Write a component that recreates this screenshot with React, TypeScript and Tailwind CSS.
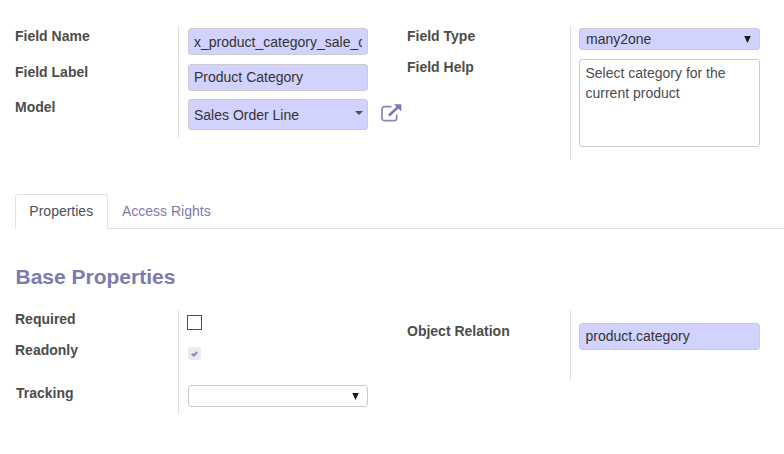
import type { ReactNode } from "react";

function Label({ className = "", children }: { className?: string; children: ReactNode }) {
  return <div className={`font-bold leading-5 text-[#4c4c4c] ${className}`}>{children}</div>;
}

function Field({ className = "", children }: { className?: string; children?: ReactNode }) {
  return (
    <div className={`flex items-center rounded-[3px] border border-[#cccccf] text-[#333] ${className}`}>
      {children}
    </div>
  );
}

function SelectArrow() {
  return (
    <svg className="ml-auto mr-[8px] h-[7px] w-[7px] shrink-0" viewBox="0 0 7 7" fill="#1b1b1b">
      <path d="M0.200 0H6.800L3.500 7Z" />
    </svg>
  );
}

function ExternalLink() {
  return (
    <svg className="mb-[3px] ml-[13px] h-[18px] w-[21px]" viewBox="0 0 21 18" fill="none">
      <path
        d="M10.500 2.600H3.400A2.400 2.400 0 0 0 1 5V14.300A2.400 2.400 0 0 0 3.400 16.700H13.300A2.400 2.400 0 0 0 15.700 14.300V10.500"
        stroke="#8a87b8"
        strokeWidth="1.7"
      />
      <path d="M8 11.400L17.500 2.700" stroke="#7c7bad" strokeWidth="2.700" />
      <path d="M13 0.300H20.300V7.600Z" fill="#7c7bad" />
    </svg>
  );
}

export default function App() {
  return (
    <main className="h-[454px] w-[784px] overflow-hidden bg-white pt-[26px] font-['Liberation_Sans',Arial,sans-serif] text-sm">
      <section className="flex h-[168px] items-start pl-[15px]">
        <div className="w-[163px]">
          <Label>Field Name</Label>
          <Label className="mt-4">Field Label</Label>
          <Label className="mt-[15px]">Model</Label>
        </div>
        <div className="h-[112px] w-[229px] border-l border-[#ddd] pl-[9px] pt-[2px]">
          <Field className="h-[27px] w-[180px] bg-[#d2d2ff] px-[5px]">
            <span className="overflow-hidden whitespace-nowrap">x_product_category_sale_order</span>
          </Field>
          <Field className="mt-[9px] h-[27px] w-[180px] bg-[#d2d2ff] px-[5px] pb-px">Product Category</Field>
          <div className="mt-2 flex items-center">
            <Field className="h-[31px] w-[180px] bg-[#d2d2ff] px-[5px]">
              Sales Order Line
              <svg className="mb-1 ml-auto mr-[-1px] h-1 w-2" viewBox="0 0 8 4" fill="#4c4c4c">
                <path d="M0 0H8L4 4Z" />
              </svg>
            </Field>
            <ExternalLink />
          </div>
        </div>
        <div className="w-[163px]">
          <Label>Field Type</Label>
          <Label className="mt-[11px]">Field Help</Label>
        </div>
        <div className="h-[134px] border-l border-[#ddd] pl-[8px] pt-[2px]">
          <Field className="h-[22px] w-[181px] bg-[#d2d2ff] pl-[6px]">
            many2one
            <SelectArrow />
          </Field>
          <div className="mt-[9px] h-[88px] w-[181px] rounded-[3px] border border-[#ccc] px-[5.500px] pt-[3px] leading-5 text-[#4c4c4c]">
            Select category for the current product
          </div>
        </div>
      </section>

      <nav className="flex h-[35px] pl-[15px]">
        <div className="w-[92.500px] rounded-t-[3px] border border-b-0 border-[#dee2e6] pt-[6px] text-center leading-5 text-[#495057]">
          Properties
        </div>
        <div className="flex-1 border-b border-[#dee2e6] pl-[14.500px] pt-[7px] leading-5 text-[#7c7bad]">
          Access Rights
        </div>
      </nav>

      <h2 className="mt-[33px] h-12 pl-[15.500px] text-[21px] font-bold leading-[30px] text-[#7c7bad]">
        Base Properties
      </h2>

      <section className="flex items-start pl-[15px]">
        <div className="mt-[-1px] w-[163px]">
          <Label>Required</Label>
          <Label className="mt-[11px]">Readonly</Label>
          <Label className="mt-[23px] pl-px">Tracking</Label>
        </div>
        <div className="h-[104px] w-[229px] border-l border-[#ddd] pl-[8px] pt-[5px]">
          <div className="h-[15px] w-[15px] border border-[#4d4d4d] bg-white" />
          <div className="ml-px mt-[17px] flex h-[13px] w-[13px] items-center justify-center rounded-[3px] bg-[#e9ecef]">
            <svg className="h-[6px] w-[7px]" viewBox="0 0 7 6" fill="none">
              <path d="M0.800 2.800L2.700 4.500L6.200 1" stroke="#8a88bd" strokeWidth="2" />
            </svg>
          </div>
          <Field className="ml-px mt-[25px] h-[22px] w-[180px]">
            <SelectArrow />
          </Field>
        </div>
        <div className="w-[163px] pt-[11px]">
          <Label>Object Relation</Label>
        </div>
        <div className="h-[70px] border-l border-[#ddd] pl-[8px] pt-[13px]">
          <Field className="h-[27px] w-[181px] bg-[#d2d2ff] px-[5.500px] pb-px">product.category</Field>
        </div>
      </section>
    </main>
  );
}
